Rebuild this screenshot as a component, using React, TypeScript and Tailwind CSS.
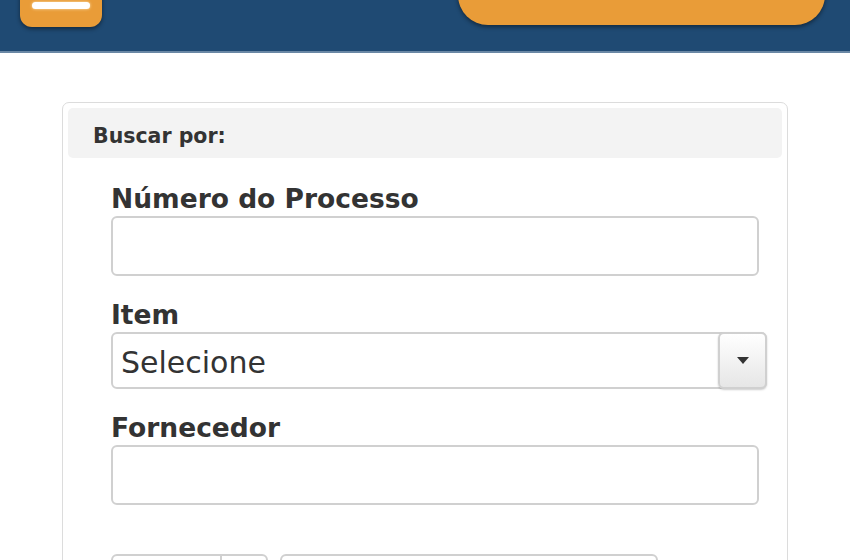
import { ChevronDown } from "lucide-react";

const font = { fontFamily: "'DejaVu Sans', Verdana, sans-serif" };

function Field({ label, children }: { label: string; children: React.ReactNode }) {
  return (
    <div className="flex flex-col">
      <label className="text-[26.5px] leading-[34px] font-bold text-[#333]">{label}</label>
      {children}
    </div>
  );
}

export default function App() {
  return (
    <div className="w-[850px] h-[560px] overflow-hidden bg-white" style={font}>
      {/* top bar */}
      <header className="h-[53px] bg-[#1f4a73] border-b-2 border-[#6a88a5] flex items-start justify-between pl-5 pr-[25px]">
        <button className="-mt-[40px] w-[82px] h-[67px] rounded-[12px] bg-[#e99c38] shadow-[0_2px_4px_rgba(0,0,0,0.45)] flex items-end justify-center pb-[18px]">
          <span className="block w-[58px] h-[7px] rounded-full bg-white shadow-[0_0_3px_rgba(255,240,200,0.9)]" />
        </button>
        <button className="-mt-[40px] w-[367px] h-[65px] rounded-[30px] bg-[#e99c38] shadow-[0_2px_4px_rgba(0,0,0,0.45)]" />
      </header>

      {/* search card */}
      <div className="mx-[62px] mt-[49px] h-[500px] rounded-[7px] border border-[#dcdcdc] p-[5px]">
        <div className="h-[50px] rounded-[5px] bg-[#f3f3f3] flex items-center px-[25px] pt-[6px]">
          <span className="text-[20.5px] font-bold text-[#333]">Buscar por:</span>
        </div>

        <div className="pl-[43px] pr-[23px] pt-[24px] flex flex-col gap-[22px]">
          <Field label="Número do Processo">
            <input className="h-[60px] w-full rounded-[6px] border-2 border-[#d0d0d0] bg-white outline-none" />
          </Field>

          <Field label="Item">
            <div className="-mr-[8px] flex h-[57px] rounded-[6px] border-2 border-[#d0d0d0] bg-white">
              <span className="flex-1 flex items-center pl-[8px] pt-[4px] text-[30px] text-[#333]">Selecione</span>
              <span className="w-[49px] -my-[2px] -mr-[2px] rounded-[6px] border-2 border-[#d0d0d0] bg-gradient-to-b from-white to-[#e6e6e6] shadow-[0_1px_2px_rgba(0,0,0,0.2)] flex items-center justify-center">
                <svg width="12" height="7" viewBox="0 0 12 7"><path d="M0 0h12L6 7z" fill="#333" /></svg>
              </span>
            </div>
          </Field>

          <Field label="Fornecedor">
            <input className="h-[60px] w-full rounded-[6px] border-2 border-[#d0d0d0] bg-white outline-none" />
          </Field>

          <div className="mt-[27px] flex gap-[12px]">
            <div className="flex h-[40px] w-[157px] rounded-[6px] border-2 border-[#d0d0d0]">
              <span className="flex-1" />
              <span className="w-[46px] border-l-2 border-[#d0d0d0] flex items-center justify-center">
                <ChevronDown size={14} className="text-[#333]" />
              </span>
            </div>
            <div className="h-[40px] w-[378px] rounded-[6px] border-2 border-[#d0d0d0]" />
          </div>
        </div>
      </div>
    </div>
  );
}
